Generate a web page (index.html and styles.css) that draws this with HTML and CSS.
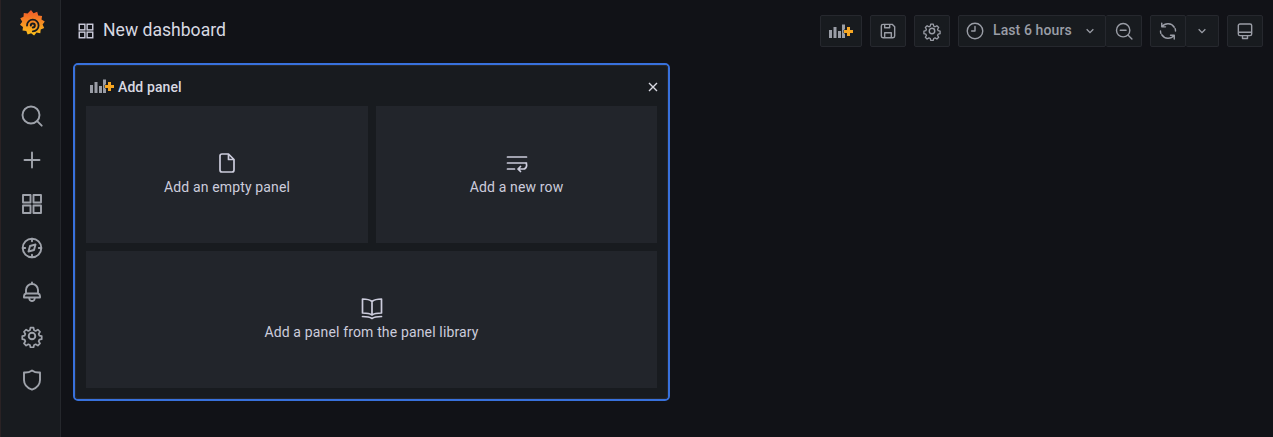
FILE: index.html
```html
<!DOCTYPE html>
<html lang="en">
<head>
  <meta charset="UTF-8" />
  <title>New dashboard - Grafana</title>
  <link rel="stylesheet" href="styles.css">
</head>
<body>
  <div class="app">
    <nav class="sidemenu">
      <div class="logo">
        <svg width="28" height="28" viewBox="0 0 28 28">
          <defs>
            <linearGradient id="logoFill" x1="0" y1="1" x2="0" y2="0">
              <stop offset="0" stop-color="#fcc21b"/>
              <stop offset="1" stop-color="#f0582a"/>
            </linearGradient>
          </defs>
          <path fill="url(#logoFill)" d="M13 1l2.500 3.300 3.700-1.500 1 3.700 3.900.4-.6 3.700 3.300 2-2.200 3 1.600 3.500-3.500 1.300-.4 3.800-3.800-.6-2.400 3-3-2.300-3.500 1.300-1.300-3.500-3.800-.5.500-3.700L2 15.800l2.200-3-1.900-3.600 3.200-1.400.3-3.800 3.800.5z"/>
          <path fill="none" stroke="#181b1f" stroke-width="1.800" stroke-linecap="round" d="M9 16.500a5.800 5.800 0 1 1 5.800 5.800"/>
          <path fill="none" stroke="#181b1f" stroke-width="2" stroke-linecap="round" d="M12.800 16.500a2 2 0 1 1 2 2"/>
        </svg>
      </div>
      <ul class="menu-list">
        <li><svg class="icon-nav" viewBox="0 0 24 24"><circle cx="11" cy="11" r="8.500"/><path d="M17.200 17.200l4.500 4.500"/></svg></li>
        <li><svg class="icon-nav" viewBox="0 0 24 24"><path d="M12 4.500v15M4.500 12h15"/></svg></li>
        <li><svg class="icon-nav" viewBox="0 0 24 24"><rect x="3" y="3" width="7.500" height="7.500"/><rect x="13.500" y="3" width="7.500" height="7.500"/><rect x="3" y="13.500" width="7.500" height="7.500"/><rect x="13.500" y="13.500" width="7.500" height="7.500"/></svg></li>
        <li><svg class="icon-nav" viewBox="0 0 24 24"><circle cx="12" cy="12" r="9.300"/><path d="M12 2.700v2.500M12 18.800v2.500M2.700 12h2.500M18.800 12h2.500M15.500 8.500l-1.500 5.500-5.500 1.500 1.500-5.500z"/></svg></li>
        <li><svg class="icon-nav" viewBox="0 0 24 24"><path d="M18 13.500V10a6 6 0 0 0-12 0v3.500c-1.200.4-2 1.300-2 2.500v1.500h16V16c0-1.200-.8-2.100-2-2.500zM6 13.500h12M12 4V2.500M9.500 17.500a2.500 2.500 0 0 0 2.500 3.500 2.500 2.500 0 0 0 2.500-3.500"/></svg></li>
        <li><svg class="icon-nav" viewBox="0 0 24 24"><use href="#gear"/></svg></li>
        <li><svg class="icon-nav" viewBox="0 0 24 24"><path d="M4 4.500c3 .3 5.700-.4 8-2 2.300 1.600 5 2.300 8 2V12c0 4.400-2.800 7.800-8 9.700C6.800 19.800 4 16.400 4 12z"/></svg></li>
      </ul>
    </nav>

    <main class="main">
      <header class="topbar">
        <div class="title">
          <svg class="icon-title" viewBox="0 0 24 24"><rect x="3" y="3" width="7.500" height="7.500"/><rect x="13.500" y="3" width="7.500" height="7.500"/><rect x="3" y="13.500" width="7.500" height="7.500"/><rect x="13.500" y="13.500" width="7.500" height="7.500"/></svg>
          <span>New dashboard</span>
        </div>
        <div class="actions">
          <button class="btn btn-add">
            <svg width="25" height="15" viewBox="0 0 25 15"><use href="#addPanel"/></svg>
          </button>
          <button class="btn">
            <svg class="icon-btn" viewBox="0 0 24 24"><path d="M4 6a2 2 0 0 1 2-2h11l3 3v11a2 2 0 0 1-2 2H6a2 2 0 0 1-2-2zM8 20v-6h8v6M8 4v4h6V4"/></svg>
          </button>
          <button class="btn">
            <svg class="icon-btn" viewBox="0 0 24 24"><use href="#gear"/></svg>
          </button>
          <div class="btn-group">
            <button class="btn btn-time">
              <svg class="icon-btn" viewBox="0 0 24 24"><circle cx="12" cy="12" r="9.300"/><path d="M12 6.500V12H8"/></svg>
              <span>Last 6 hours</span>
              <svg class="icon-caret" viewBox="0 0 24 24"><path d="M7 9.500l5 5 5-5"/></svg>
            </button>
            <button class="btn">
              <svg class="icon-btn" viewBox="0 0 24 24"><circle cx="11" cy="11" r="8"/><path d="M17 17l4.500 4.500M7.500 11h7"/></svg>
            </button>
          </div>
          <div class="btn-group">
            <button class="btn">
              <svg class="icon-btn" viewBox="0 0 24 24"><path d="M19.500 7.500A9 9 0 0 0 4.800 6.800M4.500 16.500a9 9 0 0 0 14.700.7M4.500 2.500v4.500H9M19.500 21.500V17H15"/><path d="M3 12a9 9 0 0 0 .5 3M21 12a9 9 0 0 0-.5-3"/></svg>
            </button>
            <button class="btn btn-caret">
              <svg class="icon-caret" viewBox="0 0 24 24"><path d="M7 9.500l5 5 5-5"/></svg>
            </button>
          </div>
          <button class="btn">
            <svg class="icon-btn" viewBox="0 0 24 24"><path d="M6 3.500h12a2 2 0 0 1 2 2v10a2 2 0 0 1-2 2H6a2 2 0 0 1-2-2v-10a2 2 0 0 1 2-2zM4 13.500h16M9 17.500v3.500h6v-3.500"/></svg>
          </button>
        </div>
      </header>

      <section class="add-panel">
        <div class="add-panel-inner">
          <div class="add-panel-header">
            <svg class="icon-add" width="25" height="15" viewBox="0 0 25 15"><use href="#addPanel"/></svg>
            <span>Add panel</span>
            <svg class="icon-close" viewBox="0 0 12 12"><path d="M2 2l8 8M10 2l-8 8"/></svg>
          </div>
          <div class="options">
            <div class="option">
              <svg class="icon-option" viewBox="0 0 24 24"><path d="M13.500 3H7a2 2 0 0 0-2 2v14a2 2 0 0 0 2 2h10a2 2 0 0 0 2-2V8.500zM13.500 3v5.500H19"/></svg>
              <span>Add an empty panel</span>
            </div>
            <div class="option">
              <svg class="icon-option" viewBox="0 0 24 24"><path d="M2.500 6h19M2.500 12h19M2.500 18h7M21 12c1 1.500 1 6-2.500 6H13M15.500 15.500L13 18l2.500 2.500"/></svg>
              <span>Add a new row</span>
            </div>
            <div class="option option-wide">
              <svg class="icon-option" viewBox="0 0 24 24"><path d="M12 5.500C10 3.800 6.500 3 2.500 3v14c4 0 7.500.5 9.500 2 2-1.500 5.500-2 9.500-2V3c-4 0-7.500.8-9.500 2.500zM12 5.500V19M2.500 20.500c4 0 7.500.5 9.500 2 2-1.500 5.500-2 9.500-2"/></svg>
              <span>Add a panel from the panel library</span>
            </div>
          </div>
        </div>
      </section>
    </main>
  </div>

  <svg class="defs" width="0" height="0">
    <defs>
      <g id="gear">
        <path d="M10.300 2.800h3.400l.6 2.800 1.800.8 2.400-1.500 2.400 2.400-1.500 2.400.8 1.800 2.600.6v3.400l-2.600.6-.8 1.800 1.500 2.400-2.400 2.400-2.400-1.500-1.800.8-.6 2.600h-3.400l-.6-2.600-1.800-.8-2.400 1.500-2.400-2.400 1.500-2.400-.8-1.800-2.600-.6v-3.400l2.600-.6.800-1.800-1.500-2.400 2.400-2.400 2.400 1.500 1.800-.8z" transform="translate(1.200 1.200) scale(.9)"/>
        <circle cx="12" cy="13" r="3.300" transform="translate(0 -1)"/>
      </g>
      <g id="addPanel">
        <path class="bars" d="M0 6h3v8H0zM4.500 3h3v11h-3zM9 7h3v7H9zM13 .5h3V14h-3z"/>
        <path class="plus" d="M15 6h3V3h3v3h3v3h-3v3h-3V9h-3z"/>
      </g>
    </defs>
  </svg>
</body>
</html>
```

FILE: styles.css
```css
html, body {
  margin: 0;
  padding: 0;
  height: 100%;
  background: #111217;
  font-family: Roboto, sans-serif;
  color: #ccccdc;
  overflow: hidden;
}
.app {
  display: flex;
  height: 100%;
}
.defs {
  position: absolute;
}

.sidemenu {
  flex: 0 0 61px;
  background: #181b1f;
  border-right: 1px solid #25272c;
  border-left: 1px solid #2a2224;
  box-sizing: border-box;
  padding-left: 2px;
}
.logo {
  display: flex;
  justify-content: center;
  height: 38px;
  padding-top: 9px;
  box-sizing: border-box;
}
.menu-list {
  list-style: none;
  margin: 56px 0 0;
  padding: 0;
}
.menu-list li {
  height: 44px;
  display: flex;
  align-items: center;
  justify-content: center;
}
.icon-nav {
  width: 24px;
  height: 24px;
  fill: none;
  stroke: #9fa3ab;
  stroke-width: 1.900;
  stroke-linejoin: round;
  stroke-linecap: round;
}

.main {
  flex: 1;
  min-width: 0;
  padding: 15px 10px 0 12px;
}
.topbar {
  display: flex;
  justify-content: space-between;
  align-items: center;
  height: 32px;
}
.title {
  display: flex;
  align-items: center;
  gap: 8px;
  padding-left: 4px;
  font-size: 17.600px;
  color: #d8d9e2;
}
.title span {
  padding-bottom: 2px;
}
.icon-title {
  width: 18px;
  height: 18px;
  fill: none;
  stroke: #ccccdc;
  stroke-width: 1.900;
}
.actions {
  display: flex;
  gap: 8px;
}
.btn {
  height: 32px;
  min-width: 36px;
  padding: 0;
  display: flex;
  align-items: center;
  justify-content: center;
  gap: 8px;
  background: #181b1f;
  border: 1px solid #26282e;
  border-radius: 2px;
  font-family: inherit;
  font-size: 14px;
  font-weight: 500;
  letter-spacing: 0.1px;
  color: #9a9da6;
}
.btn span {
  padding-bottom: 2px;
}
.btn-add {
  width: 42px;
}
.btn-time {
  width: 148px;
  padding: 0 7px 0 6px;
  justify-content: flex-start;
}
.btn-caret {
  width: 33px;
  min-width: 33px;
}
.btn-group {
  display: flex;
}
.btn-group .btn + .btn {
  border-left: 0;
}
.icon-btn {
  width: 20px;
  height: 20px;
  fill: none;
  stroke: #9a9da6;
  stroke-width: 1.700;
  stroke-linejoin: round;
  stroke-linecap: round;
}
.icon-caret {
  width: 16px;
  height: 16px;
  fill: none;
  stroke: #9a9da6;
  stroke-width: 2;
  margin-left: auto;
}
.btn-caret .icon-caret {
  margin-left: 0;
}
.bars {
  fill: #9a9da6;
}
.icon-add .bars {
  fill: #a8aab2;
}
.plus {
  fill: #f5a623;
  stroke: #181b1f;
  stroke-width: 1;
  paint-order: stroke;
}

.add-panel {
  margin: 16px 0 0;
  width: 597px;
  height: 338px;
  box-sizing: border-box;
  border: 2px solid #3871dc;
  border-radius: 5px;
  background: #181b1f;
}
.add-panel-inner {
  height: 100%;
  box-sizing: border-box;
  border: 1px solid #25272c;
  border-radius: 3px;
  padding: 0 10px;
}
.add-panel-header {
  display: flex;
  align-items: center;
  height: 40px;
  gap: 3px;
  font-size: 14px;
  font-weight: 500;
  letter-spacing: 0.1px;
  color: #d8d9e2;
  margin-left: 4px;
}
.add-panel-header span {
  padding-top: 2px;
}
.icon-add {
  margin-top: 1px;
}
.icon-close {
  width: 12px;
  height: 12px;
  margin-left: auto;
  margin-right: -2px;
  margin-top: 2px;
  fill: none;
  stroke: #d8d9e2;
  stroke-width: 1.400;
}
.options {
  display: grid;
  grid-template-columns: 282px 281px;
  grid-template-rows: 137px 137px;
  gap: 8px;
}
.option {
  background: #22252b;
  display: flex;
  flex-direction: column;
  align-items: center;
  justify-content: center;
  gap: 4px;
  padding-bottom: 4px;
  box-sizing: border-box;
  font-size: 14px;
  letter-spacing: 0.15px;
  color: #ccccdc;
}
.option-wide {
  grid-column: 1 / span 2;
}
.icon-option {
  width: 24px;
  height: 24px;
  fill: none;
  stroke: #ccccdc;
  stroke-width: 1.700;
  stroke-linejoin: round;
  stroke-linecap: round;
}
```
